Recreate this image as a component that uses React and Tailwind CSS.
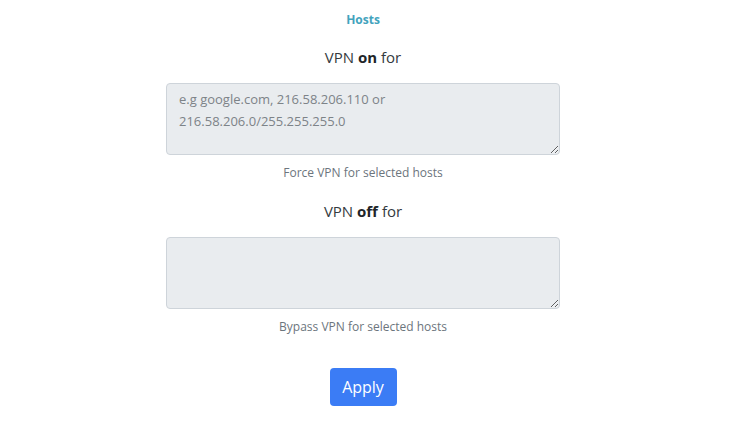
const HostField = ({ label, bold, hint, placeholder }) => (
  <>
    <h2 className="text-[15px] leading-[22px] text-[#343a40]">
      VPN <span className="font-bold text-[#212529]">{bold}</span> for
    </h2>
    <textarea
      placeholder={placeholder}
      aria-label={label}
      className="w-[394px] h-[72px] mt-[15px] rounded-[4px] border border-[#ced4da] bg-[#e9ecef] px-3 py-[4px] text-[13px] leading-[22px] text-[#495057] placeholder:text-[#7d8388] focus:outline-none"
    />
    <p className="mt-[9px] text-[12px] leading-[18px] text-[#6c757d]">{hint}</p>
  </>
);

export default function App() {
  return (
    <div className="bg-white flex flex-col items-center pt-[11px] pr-[29px] pb-4" style={{ fontFamily: '"Open Sans", "Noto Sans", sans-serif' }}>
      <h1 className="text-[12px] leading-[18px] font-bold text-[#42a3bd]">Hosts</h1>
      <div className="mt-[17px] flex flex-col items-center">
        <HostField
          label="VPN on for"
          bold="on"
          hint="Force VPN for selected hosts"
          placeholder="e.g google.com, 216.58.206.110 or 216.58.206.0/255.255.255.0"
        />
      </div>
      <div className="mt-[18px] flex flex-col items-center">
        <HostField label="VPN off for" bold="off" hint="Bypass VPN for selected hosts" placeholder="" />
      </div>
      <button className="mt-[32px] w-[67px] h-[38px] rounded-[4px] bg-[#3b7cf5] text-white text-[16px]">
        Apply
      </button>
    </div>
  );
}
